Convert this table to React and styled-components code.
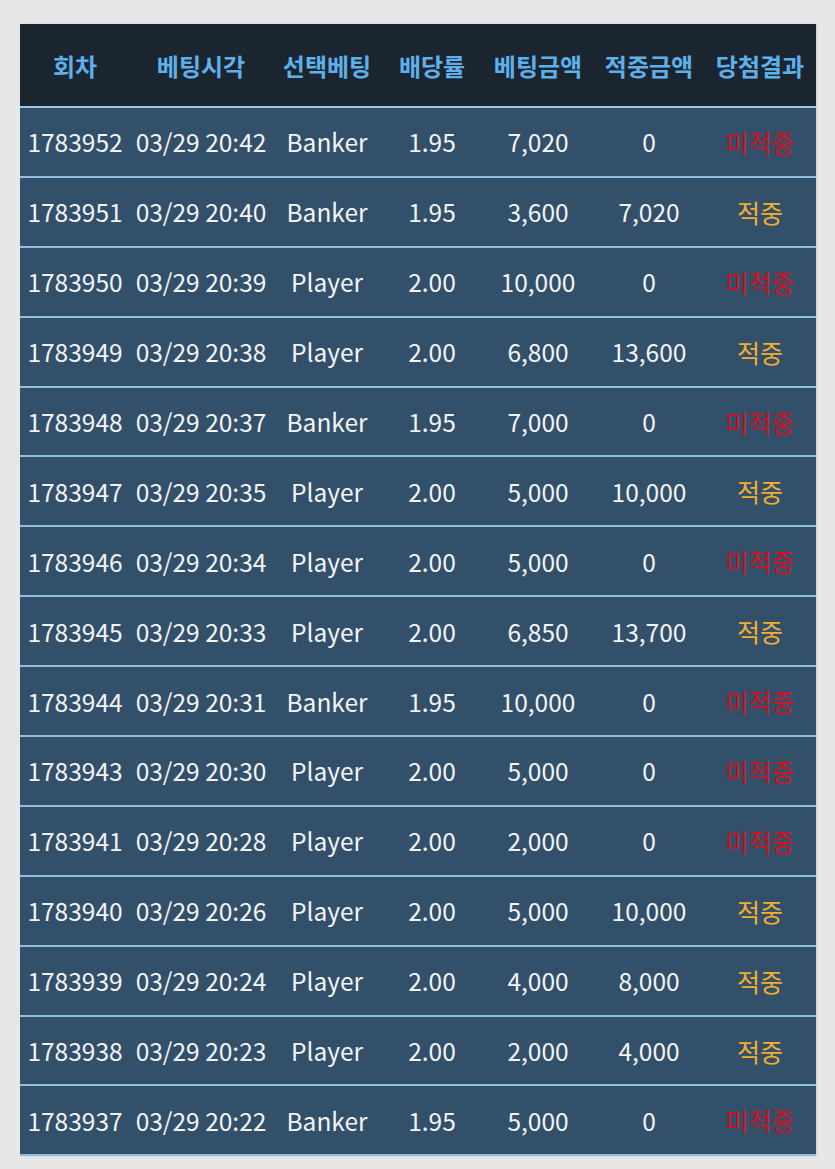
import styled, { createGlobalStyle } from "styled-components";

const GlobalStyle = createGlobalStyle`
  html, body {
    margin:0;
    padding:0;
    background:#e7e7e7;
  }
  body {
    font-family:"Noto Sans CJK KR","Noto Sans",sans-serif;
  }
`

const colWidths = [110, 142, 110, 100, 112, 110, 112];
const headers = ["회차", "베팅시각", "선택베팅", "배당률", "베팅금액", "적중금액", "당첨결과"];

const rows = [
  ["1783952", "03/29 20:42", "Banker", "1.95", "7,020", "0", false],
  ["1783951", "03/29 20:40", "Banker", "1.95", "3,600", "7,020", true],
  ["1783950", "03/29 20:39", "Player", "2.00", "10,000", "0", false],
  ["1783949", "03/29 20:38", "Player", "2.00", "6,800", "13,600", true],
  ["1783948", "03/29 20:37", "Banker", "1.95", "7,000", "0", false],
  ["1783947", "03/29 20:35", "Player", "2.00", "5,000", "10,000", true],
  ["1783946", "03/29 20:34", "Player", "2.00", "5,000", "0", false],
  ["1783945", "03/29 20:33", "Player", "2.00", "6,850", "13,700", true],
  ["1783944", "03/29 20:31", "Banker", "1.95", "10,000", "0", false],
  ["1783943", "03/29 20:30", "Player", "2.00", "5,000", "0", false],
  ["1783941", "03/29 20:28", "Player", "2.00", "2,000", "0", false],
  ["1783940", "03/29 20:26", "Player", "2.00", "5,000", "10,000", true],
  ["1783939", "03/29 20:24", "Player", "2.00", "4,000", "8,000", true],
  ["1783938", "03/29 20:23", "Player", "2.00", "2,000", "4,000", true],
  ["1783937", "03/29 20:22", "Banker", "1.95", "5,000", "0", false],
];

const App = () => {
  return (
    <Page>
      <GlobalStyle />
      <Table>
        <colgroup>
          {colWidths.map((w, i) => <col key={i} style={{ width: w }} />)}
        </colgroup>
        <thead>
          <tr>
            {headers.map((h) => <Th key={h}>{h}</Th>)}
          </tr>
        </thead>
        <tbody>
          {rows.map((r) => (
            <Row key={r[0]}>
              <Td>{r[0]}</Td>
              <Td>{r[1]}</Td>
              <Td>{r[2]}</Td>
              <Td>{r[3]}</Td>
              <Td>{r[4]}</Td>
              <Td>{r[5]}</Td>
              <Result $win={r[6]}>{r[6] ? "적중" : "미적중"}</Result>
            </Row>
          ))}
        </tbody>
      </Table>
    </Page>
  )
}

const Page = styled.div`
  padding:24px 0 0 20px;
  min-height:1169px;
  box-sizing:border-box;
`

const Table = styled.table`
  width:796px;
  table-layout:fixed;
  border-collapse:collapse;
  background:#33506a;
  box-shadow:1px 0 2px rgba(0,0,0,0.12);
`

const Th = styled.th`
  height:82px;
  padding:0;
  background:#1b2530;
  color:#5eb0ea;
  font-size:24px;
  font-weight:700;
  text-align:center;
  border-bottom:2px solid #9cc9e6;
  white-space:nowrap;
`

const Row = styled.tr`
  border-bottom:2px solid #8fc0e0;
`

const Td = styled.td`
  height:67.9px;
  padding:0;
  color:#f2f4f6;
  font-size:24.5px;
  text-align:center;
  white-space:nowrap;
`

const Result = styled(Td)`
  color:${(props) => props.$win ? "#f2ae2e" : "#d6101c"};
  font-size:25px;
`

export default App
